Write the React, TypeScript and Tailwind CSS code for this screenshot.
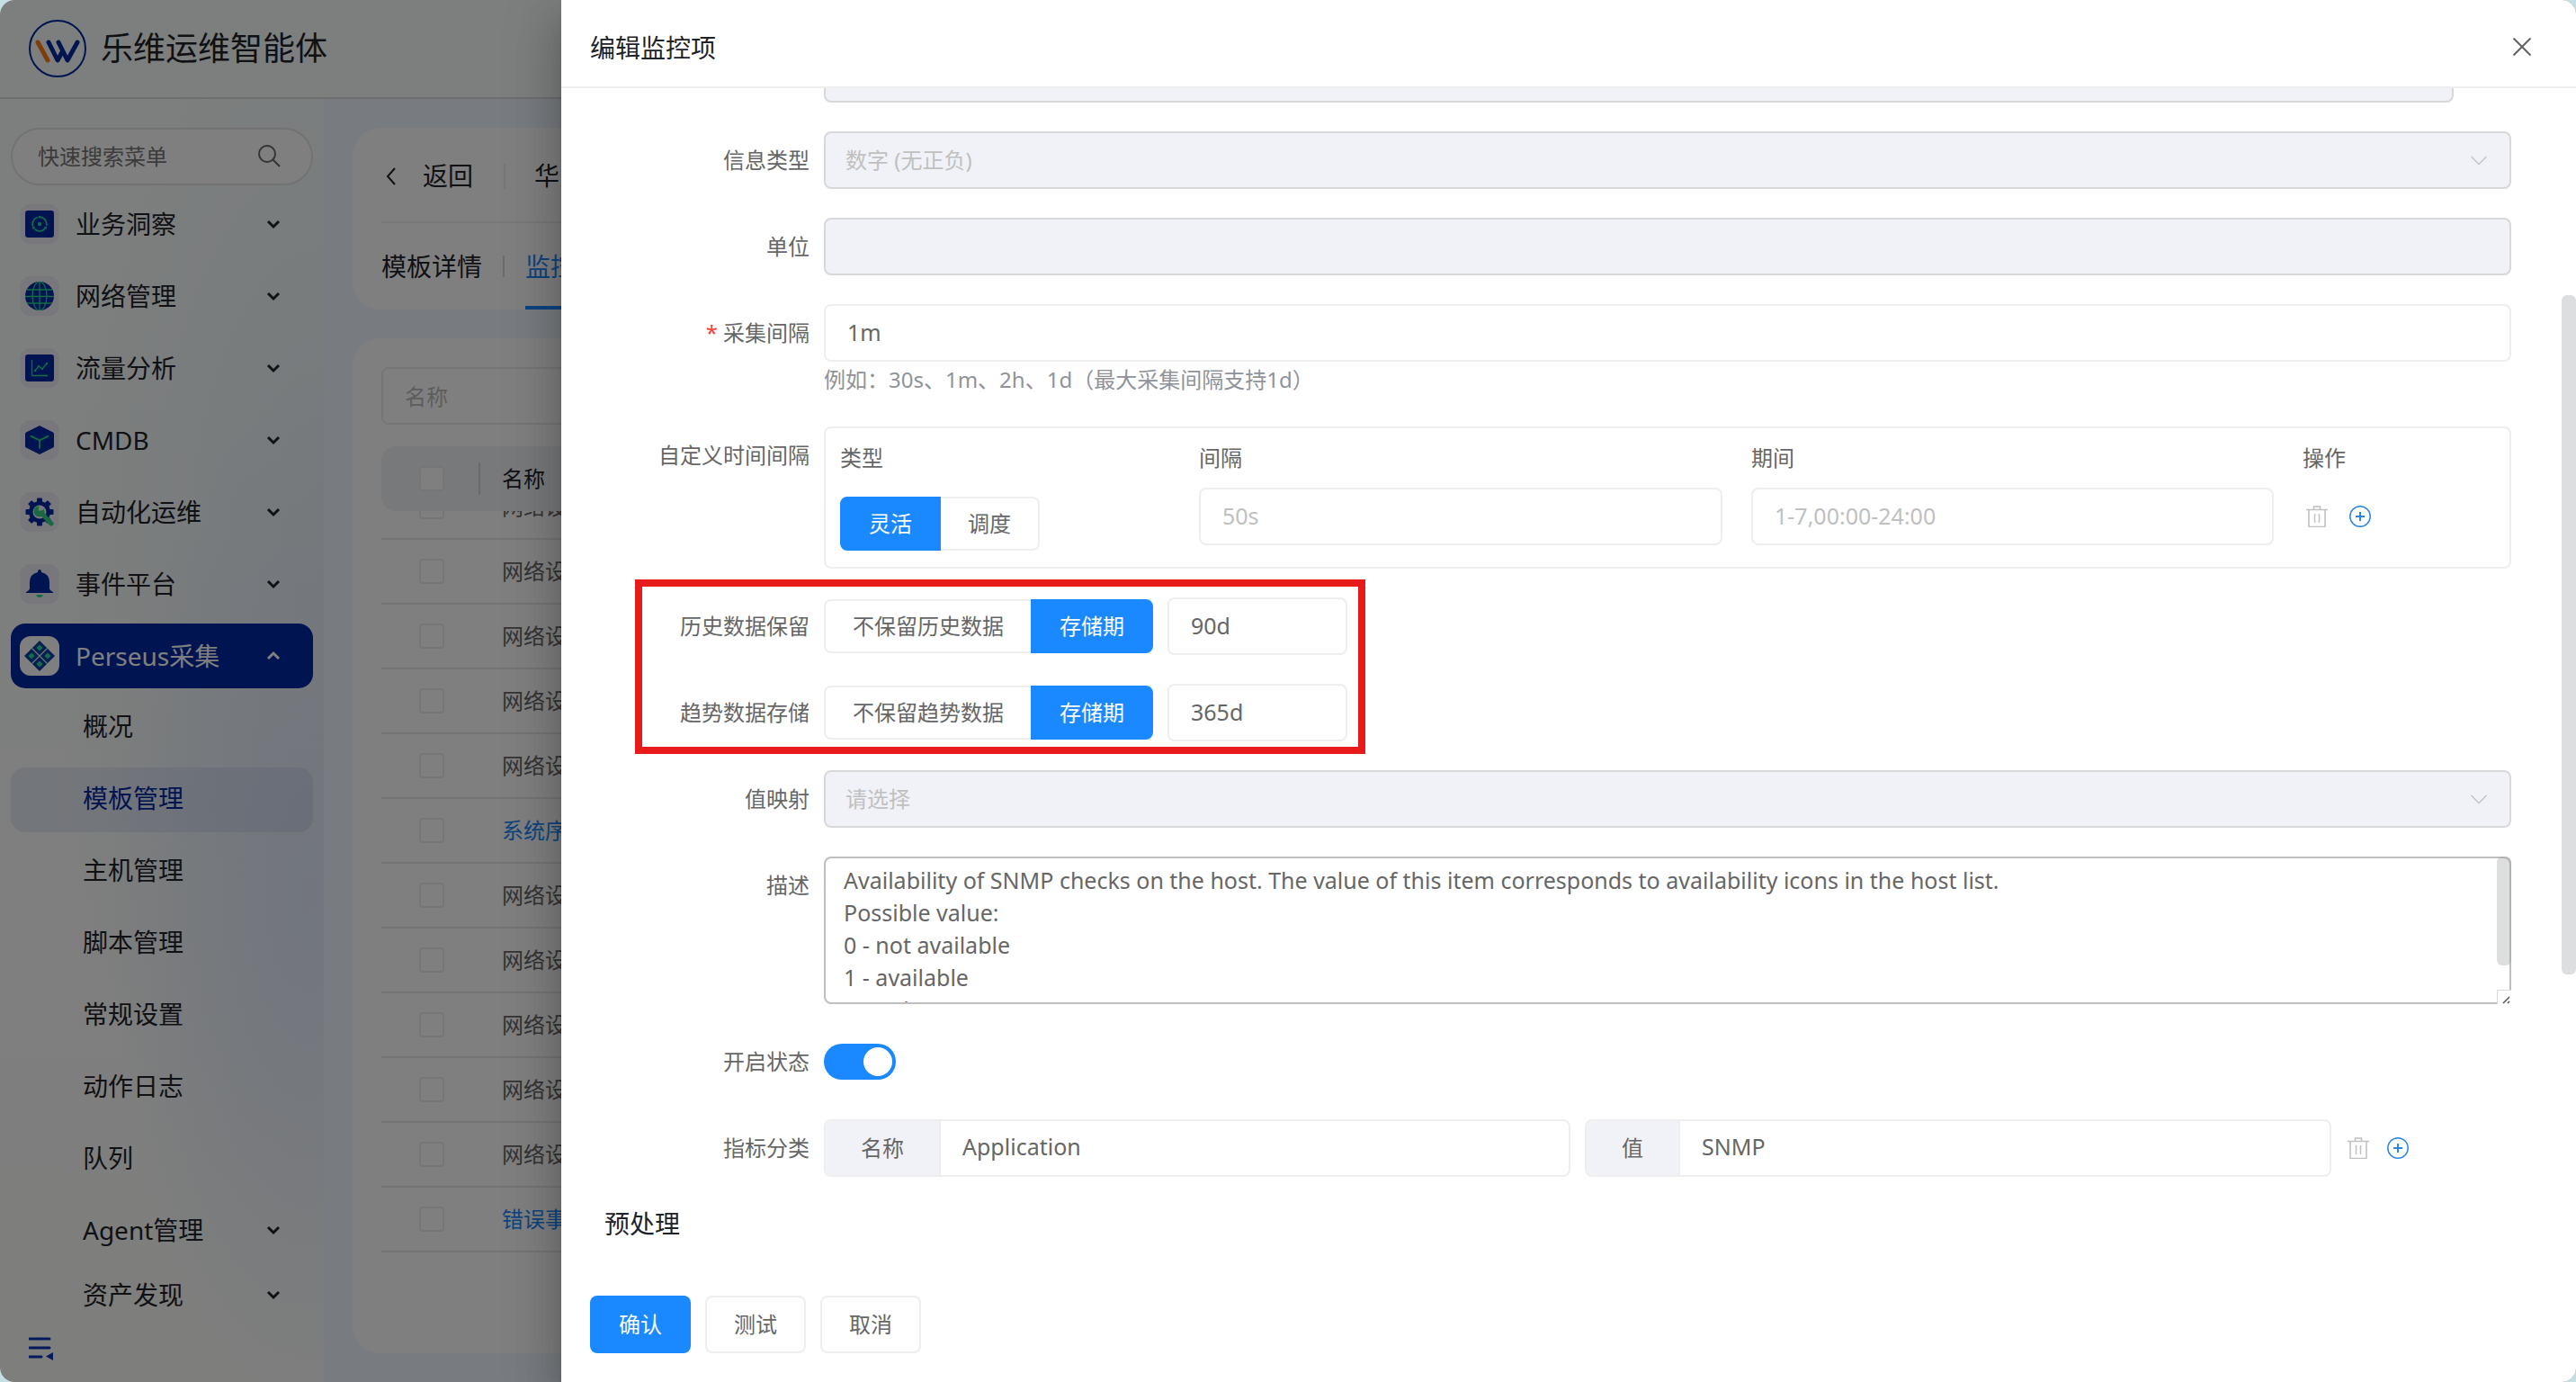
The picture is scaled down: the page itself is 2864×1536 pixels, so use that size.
import React from "react";

type IconProps = { className?: string };

const Logo = () => (
  <svg viewBox="0 0 64 64" className="size-16" fill="none" aria-hidden="true">
    <circle cx="32" cy="32" r="31" stroke="#0029a3" strokeWidth="2" />
    <g strokeWidth="5" strokeLinecap="round" strokeLinejoin="round">
      <path d="M22 25 32 45 37 36" stroke="#0029a3" />
      <path d="M33 25 43 45 54 25" stroke="#0029a3" />
      <path d="M10 25 21 45" stroke="#ff7d12" />
    </g>
  </svg>
);

const InsightIcon = () => (
  <svg viewBox="0 0 32 32" className="size-8" fill="none" aria-hidden="true">
    <rect width="32" height="30" y="1" rx="3" fill="#0029a3" />
    <circle cx="16" cy="16" r="2.2" fill="#22d98b" />
    <circle cx="16" cy="16" r="7.800" stroke="#22d98b" strokeWidth="1.800" strokeDasharray="12.500 3.830" transform="rotate(-80 16 16)" />
    <circle cx="16" cy="8.200" r="1.500" fill="#22d98b" />
    <circle cx="9.300" cy="20" r="1.500" fill="#22d98b" />
    <circle cx="22.700" cy="20" r="1.500" fill="#22d98b" />
  </svg>
);

const GlobeIcon = () => (
  <svg viewBox="0 0 32 32" className="size-8" fill="none" aria-hidden="true">
    <circle cx="16" cy="16" r="16" fill="#0029a3" />
    <g stroke="#22d98b" strokeWidth="1.300">
      <path d="M16 0v32M1.500 9h29M0 16.500h32M2 24h28" />
      <ellipse cx="16" cy="16" rx="8" ry="16" />
    </g>
  </svg>
);

const ChartIcon = () => (
  <svg viewBox="0 0 32 32" className="size-8" fill="none" aria-hidden="true">
    <rect width="32" height="30" y="1" rx="3" fill="#0029a3" />
    <path d="M7.500 7v17.500H25" stroke="#22d98b" strokeWidth="1.300" />
    <path d="M11 19l4-5 4 3 5-6" stroke="#22d98b" strokeWidth="1.300" />
    <circle cx="11" cy="19" r="1.200" fill="#22d98b" />
    <circle cx="15" cy="14" r="1.200" fill="#22d98b" />
    <circle cx="19" cy="17" r="1.200" fill="#22d98b" />
    <circle cx="24" cy="11" r="1.200" fill="#22d98b" />
  </svg>
);

const CubeIcon = () => (
  <svg viewBox="0 0 32 32" className="size-8" fill="none" aria-hidden="true">
    <path d="M16 0 31 7.500Q32 8 32 9v14q0 1-1 1.500L16 32 1 24.500Q0 24 0 23V9q0-1 1-1.500Z" fill="#0029a3" />
    <path d="M6 11.500l10 5 10-5M16 16.500v9" stroke="#22c97b" strokeWidth="2" />
  </svg>
);

const GearIcon = () => (
  <svg viewBox="0 0 32 32" className="size-8" fill="none" aria-hidden="true">
    <g fill="#0029a3">
      <circle cx="16" cy="16" r="12" />
      {[0, 45, 90, 135].map((a) => (
        <rect key={a} x="13" y="0.500" width="6" height="31" rx="1" transform={`rotate(${a} 16 16)`} />
      ))}
    </g>
    <circle cx="16" cy="16" r="7.500" fill="#efeff8" />
    <path d="M18 17 29 29" stroke="#35d385" strokeWidth="5" strokeLinecap="round" />
    <path d="M14 9.500a6 6 0 1 0 7.500 7l-.5-4-3.500 3-3-1.500 1-4Z" fill="#35d385" />
  </svg>
);

const BellIcon = () => (
  <svg viewBox="0 0 32 32" className="size-8" aria-hidden="true">
    <path d="M16 0q2 0 2 3 9 2 9 11v7q0 2 4 4v1H1v-1q4-2 4-4v-7Q5 5 14 3q0-3 2-3Z" fill="#0029a3" />
    <path d="M12.500 28h7a3.500 3 0 0 1-7 0Z" fill="#22d98b" />
  </svg>
);

const PerseusIcon = () => (
  <svg viewBox="0 0 36 36" className="size-9" aria-hidden="true">
    <path d="M18 1 35 18 18 35 1 18Z" fill="#0a3f9c" />
    <path d="M9.500 9.500l17 17M26.500 9.500l-17 17" stroke="#dfe8f5" strokeWidth="1.200" />
    <path d="M18 5.500l3.500 3.500-3.500 3.500-3.500-3.500ZM18 23.500l3.500 3.500-3.500 3.500-3.500-3.500ZM9 14.500l3.500 3.500-3.500 3.500-3.500-3.500ZM27 14.500l3.500 3.500-3.500 3.500-3.500-3.500Z" fill="#22d9a0" />
  </svg>
);

const ChevronDown = ({ className = "" }: IconProps) => (
  <svg viewBox="0 0 16 16" className={`size-4 ${className}`} fill="none" stroke="currentColor" strokeWidth="3" aria-hidden="true">
    <path d="M2 5l6 6 6-6" />
  </svg>
);

const TrashIcon = () => (
  <svg viewBox="0 0 24 24" className="size-6" fill="none" stroke="#c0c0c0" strokeWidth="1.500" aria-hidden="true">
    <path d="M0 4.500h24M3 4.500v19h18v-19M8.500 4.500V1h7v3.500M9.500 9v10M14.500 9v10" />
  </svg>
);

const PlusIcon = () => (
  <svg viewBox="0 0 24 24" className="size-6" fill="none" stroke="#2b85e4" strokeWidth="1.500" aria-hidden="true">
    <circle cx="12" cy="12" r="11.200" />
    <path d="M7 12h10M12 7v10" strokeWidth="2" />
  </svg>
);

const SelectArrow = () => (
  <svg viewBox="0 0 20 20" className="pointer-events-none absolute right-[26px] top-1/2 size-5 -translate-y-1/2" fill="none" stroke="#c0c4cc" strokeWidth="1.500" aria-hidden="true">
    <path d="M1.500 6l8.500 8.500L18.500 6" />
  </svg>
);

const menu = [
  { label: "业务洞察", icon: <InsightIcon /> },
  { label: "网络管理", icon: <GlobeIcon /> },
  { label: "流量分析", icon: <ChartIcon /> },
  { label: "CMDB", icon: <CubeIcon /> },
  { label: "自动化运维", icon: <GearIcon /> },
  { label: "事件平台", icon: <BellIcon /> },
];

const subMenu = ["概况", "模板管理", "主机管理", "脚本管理", "常规设置", "动作日志", "队列"];

const rows = ["网络设", "网络设", "网络设", "网络设", "网络设", "系统序", "网络设", "网络设", "网络设", "网络设", "网络设", "错误事"];

function Sidebar() {
  return (
    <aside className="flex w-[360px] shrink-0 flex-col bg-[radial-gradient(ellipse_at_95%_62%,#e4ebfa_0%,transparent_45%),radial-gradient(ellipse_at_100%_38%,#ecf4f9_0%,transparent_60%),linear-gradient(#fbfffd,#fcfdfb)] px-3 pt-8 text-[28px] text-[#1f2329]">
      <div className="mb-[7px] flex h-16 items-center rounded-full border-2 border-[#e4e4e4] bg-white pl-7 pr-[34px]">
        <input aria-label="快速搜索菜单" placeholder="快速搜索菜单" className="min-w-0 flex-1 bg-transparent text-2xl outline-none placeholder:text-[#777]" />
        <svg viewBox="0 0 26 26" className="size-[26px] text-[#666]" fill="none" stroke="currentColor" strokeWidth="2" aria-hidden="true">
          <circle cx="11" cy="10" r="9" />
          <path d="M17.500 16.500 25 24" />
        </svg>
      </div>
      <nav className="flex flex-col">
        <div className="mb-2 flex flex-col gap-2">
          {menu.map((m) => (
            <button key={m.label} className="flex h-[72px] w-full items-center pl-2.5 pr-9 text-left">
              <span className="flex size-11 items-center justify-center rounded-xl bg-[#efeff8]">{m.icon}</span>
              <span className="ml-[18px] flex-1">{m.label}</span>
              <ChevronDown />
            </button>
          ))}
          <button className="flex h-[72px] w-full items-center rounded-2xl bg-[#0029a3] pl-2.5 pr-9 text-left text-white">
            <span className="flex size-11 items-center justify-center rounded-xl bg-white">
              <PerseusIcon />
            </span>
            <span className="ml-[18px] flex-1">Perseus采集</span>
            <ChevronDown className="rotate-180" />
          </button>
          {subMenu.map((s) => (
            <a
              key={s}
              href="#"
              className={`flex h-[72px] items-center rounded-2xl pb-1 pl-20 ${s === "模板管理" ? "bg-[#0029a3]/8 text-[#0029a3]" : ""}`}
            >
              {s}
            </a>
          ))}
        </div>
        {["Agent管理", "资产发现"].map((s) => (
          <button key={s} className="flex h-[72px] w-full items-center pb-1 pl-20 pr-9 text-left">
            <span className="flex-1">{s}</span>
            <ChevronDown />
          </button>
        ))}
      </nav>
      <button aria-label="收起菜单" className="ml-5 mt-1 size-8">
        <svg viewBox="0 0 32 32" className="size-8" aria-hidden="true">
          <path d="M1 7h22M1 17h22M1 27h13" stroke="#0a35b8" strokeWidth="3" strokeLinecap="round" />
          <path d="M27 22v9l-8-4.500Z" fill="#0a35b8" />
        </svg>
      </button>
    </aside>
  );
}

function Checkbox({ label }: { label: string }) {
  return <input type="checkbox" aria-label={label} className="block size-7 appearance-none rounded border-2 border-[#ececec] bg-white" />;
}

function Content() {
  return (
    <main className="flex min-w-0 flex-1 flex-col gap-8 bg-[#f0f7ff] p-8 text-2xl text-[#666]">
      <section className="rounded-[32px] bg-white px-8 text-[28px] text-[#1f2329]">
        <div className="flex h-[106px] items-center border-b-2 border-[#eee] pt-1">
          <button className="flex items-center">
            <svg viewBox="0 0 24 24" className="size-6" fill="none" stroke="currentColor" strokeWidth="2" aria-hidden="true">
              <path d="M15 3l-8 9 8 9" />
            </svg>
            <span className="ml-[22px]">返回</span>
          </button>
          <span className="ml-[34px] mr-8 h-7 w-0.5 bg-[#eee]" />
          <span>华为</span>
        </div>
        <div className="flex h-24 items-center">
          <a href="#" className="pt-0.5">模板详情</a>
          <span className="mx-[23px] h-6 w-0.5 bg-[#d8d8d8]" />
          <a href="#" className="flex h-full items-center border-b-4 border-[#1a89ff] pt-1.5 text-[#1a89ff]">监控</a>
        </div>
      </section>
      <section className="flex min-h-0 flex-1 flex-col rounded-[32px] bg-white px-8 pt-8">
        <input aria-label="名称" placeholder="名称" className="h-16 w-80 shrink-0 rounded-lg border-2 border-[#eaeaea] px-6 outline-none placeholder:text-[#bbb]" />
        <div className="mt-6 flex h-[72px] shrink-0 items-center rounded-2xl bg-[#f1f2f7] pl-[42px] text-[#1f2329]">
          <Checkbox label="全选" />
          <span className="mx-[38px] mr-6 h-9 w-0.5 bg-[#d4d4d8]" />
          名称
        </div>
        <div className="overflow-hidden">
          <table className="-mt-[41px] w-full border-collapse text-left">
            <tbody>
              {rows.map((r, i) => (
                <tr key={i} className="h-[72px] border-b-2 border-[#e9e9e9]">
                  <td className="w-[134px] pl-[42px]">
                    <Checkbox label={`选择第${i + 1}行`} />
                  </td>
                  <td className={r === "网络设" ? "" : "text-[#1a89ff]"}>{r}</td>
                </tr>
              ))}
            </tbody>
          </table>
        </div>
      </section>
    </main>
  );
}

function Field({ label, htmlFor, required, children }: { label: string; htmlFor?: string; required?: boolean; children: React.ReactNode }) {
  return (
    <div className="flex gap-4">
      <label htmlFor={htmlFor} className="flex h-16 w-[212px] shrink-0 items-center justify-end">
        {required && <span className="mr-1.5 text-[#f04134]">*</span>}
        {label}
      </label>
      <div className="min-w-0 flex-1">{children}</div>
    </div>
  );
}

function Segmented({ name, options, selected }: { name: string; options: string[]; selected: number }) {
  return (
    <div className="flex h-[60px]" role="radiogroup">
      {options.map((o, i) => (
        <label
          key={o}
          className="flex cursor-pointer items-center border-2 border-[#eee] px-7 first:rounded-l-lg last:rounded-r-lg not-has-checked:first:border-r-0 not-has-checked:last:border-l-0 has-checked:border-[#1a89ff] has-checked:bg-[#1a89ff] has-checked:text-white"
        >
          <input type="radio" name={name} defaultChecked={i === selected} className="sr-only" />
          <span className="px-0.5">{o}</span>
        </label>
      ))}
    </div>
  );
}

function DisabledSelect({ id, text }: { id: string; text: string }) {
  return (
    <div className="relative">
      <select id={id} disabled className="block h-16 w-full appearance-none rounded-lg border-2 border-[#d8d8d8] bg-[#f1f2f7] px-[22px] text-[#c0c0c0] opacity-100">
        <option>{text}</option>
      </select>
      <SelectArrow />
    </div>
  );
}

function RowActions() {
  return (
    <>
      <button type="button" aria-label="删除"><TrashIcon /></button>
      <button type="button" aria-label="添加"><PlusIcon /></button>
    </>
  );
}

const inputClass = "block h-16 rounded-lg border-2 border-[#eee] bg-white px-6 pb-0.5 text-[25px] outline-none placeholder:text-[#c0c0c0]";

function AddonInput({ id, addon, value, addonClass }: { id: string; addon: string; value: string; addonClass: string }) {
  return (
    <div className="flex h-16 min-w-0 flex-1 overflow-hidden rounded-lg border-2 border-[#eee]">
      <label htmlFor={id} className={`flex shrink-0 items-center justify-center border-r-2 border-[#eee] bg-[#f1f2f7] ${addonClass}`}>{addon}</label>
      <input id={id} defaultValue={value} className="min-w-0 flex-1 px-6 pb-0.5 text-[25px] outline-none" />
    </div>
  );
}

const description = `Availability of SNMP checks on the host. The value of this item corresponds to availability icons in the host list.
Possible value:
0 - not available
1 - available
2 - unknown`;

function Drawer() {
  return (
    <div
      role="dialog"
      aria-label="编辑监控项"
      className="absolute inset-y-0 left-[624px] right-0 flex flex-col bg-white text-2xl text-[#666] shadow-[0_16px_20px_-10px_rgba(0,0,0,0.2),0_32px_48px_4px_rgba(0,0,0,0.14),0_12px_60px_10px_rgba(0,0,0,0.12)]"
    >
      <header className="flex h-[98px] shrink-0 items-center justify-between border-b-2 border-[#eee] pl-8 pr-12 pt-2">
        <h2 className="pt-1 text-[28px] text-[#1f2329]">编辑监控项</h2>
        <button aria-label="关闭">
          <svg viewBox="0 0 24 24" className="size-6" fill="none" stroke="#606266" strokeWidth="2" aria-hidden="true">
            <path d="M2.500 2.500l19 19M21.500 2.500l-19 19" />
          </svg>
        </button>
      </header>
      <div className="relative min-h-0 flex-1 overflow-hidden">
        <form className="-mt-12 flex flex-col gap-8 pl-16 pr-[72px]">
          <div className="ml-[228px] mr-16">
            <input disabled aria-label="键值" className="block h-16 w-full rounded-lg border-2 border-[#d8d8d8] bg-[#f1f2f7]" />
          </div>
          <Field label="信息类型" htmlFor="info-type">
            <DisabledSelect id="info-type" text="数字 (无正负)" />
          </Field>
          <Field label="单位" htmlFor="unit">
            <input id="unit" disabled className="block h-16 w-full rounded-lg border-2 border-[#d8d8d8] bg-[#f1f2f7]" />
          </Field>
          <Field label="采集间隔" htmlFor="interval" required>
            <input id="interval" defaultValue="1m" className={`${inputClass} w-full`} />
            <p className="h-10 leading-10 text-[#909399]">例如：30s、1m、2h、1d（最大采集间隔支持1d）</p>
          </Field>
          <Field label="自定义时间间隔">
            <div className="grid grid-cols-[399fr_614fr_613fr_246fr] rounded-lg border-2 border-[#eee] pb-[18px]">
              {["类型", "间隔", "期间", "操作"].map((h) => (
                <div key={h} className="flex h-[66px] items-center px-4">{h}</div>
              ))}
              <div className="px-4 pt-2.5">
                <Segmented name="interval-type" options={["灵活", "调度"]} selected={0} />
              </div>
              <div className="px-4">
                <input aria-label="间隔" placeholder="50s" className={`${inputClass} w-full`} />
              </div>
              <div className="px-4">
                <input aria-label="期间" placeholder="1-7,00:00-24:00" className={`${inputClass} w-full`} />
              </div>
              <div className="flex h-16 items-center gap-6 px-5">
                <RowActions />
              </div>
            </div>
          </Field>
          <div className="relative flex flex-col gap-8">
            <Field label="历史数据保留" htmlFor="history">
              <div className="flex items-center gap-4">
                <Segmented name="history-mode" options={["不保留历史数据", "存储期"]} selected={1} />
                <input id="history" defaultValue="90d" className={`${inputClass} w-[200px]`} />
              </div>
            </Field>
            <Field label="趋势数据存储" htmlFor="trend">
              <div className="flex items-center gap-4">
                <Segmented name="trend-mode" options={["不保留趋势数据", "存储期"]} selected={1} />
                <input id="trend" defaultValue="365d" className={`${inputClass} w-[200px]`} />
              </div>
            </Field>
            <div className="pointer-events-none absolute -bottom-3.5 -top-5 left-[18px] w-[812px] border-8 border-[#e81b1b]" />
          </div>
          <Field label="值映射" htmlFor="mapping">
            <DisabledSelect id="mapping" text="请选择" />
          </Field>
          <Field label="描述" htmlFor="desc">
            <div className="relative">
              <textarea
                id="desc"
                defaultValue={description}
                className="block h-[164px] w-full resize-none overflow-hidden rounded-lg border-2 border-[#bfbfbf] px-5 py-1.5 text-[25px] leading-9 outline-none"
              />
              <span className="absolute right-0 top-0 h-[121px] w-4 rounded-md bg-[#909399]/30" />
              <svg viewBox="0 0 16 16" className="absolute bottom-0 right-0 size-4" fill="none" aria-hidden="true">
                <path d="M0 0h16v16H0Z" fill="#fff" />
                <path d="M.5 16V.5H16" stroke="#d8d8d8" />
                <path d="M7 15l7-7M12 15l2-2" stroke="#555" strokeWidth="1.500" />
              </svg>
            </div>
          </Field>
          <Field label="开启状态" htmlFor="enabled">
            <div className="flex h-16 items-center">
              <input
                id="enabled"
                type="checkbox"
                role="switch"
                defaultChecked
                className="relative h-10 w-20 cursor-pointer appearance-none rounded-full bg-[#dcdfe6] before:absolute before:left-1 before:top-1 before:size-8 before:rounded-full before:bg-white checked:bg-[#1a89ff] checked:before:left-11"
              />
            </div>
          </Field>
          <Field label="指标分类" htmlFor="tag-name">
            <div className="flex items-center gap-4">
              <AddonInput id="tag-name" addon="名称" value="Application" addonClass="w-32" />
              <AddonInput id="tag-value" addon="值" value="SNMP" addonClass="w-[104px]" />
              <div className="flex w-[184px] items-center gap-5 pl-0.5">
                <RowActions />
              </div>
            </div>
          </Field>
          <h3 className="-ml-4 h-10 text-[28px] leading-10 text-[#1f2329]">预处理</h3>
        </form>
        <span className="absolute right-0 top-[230px] h-[755px] w-4 rounded-md bg-[#dddee0]" />
      </div>
      <footer className="flex shrink-0 gap-4 px-8 pb-8 pt-4">
        <button className="h-16 rounded-lg bg-[#1a89ff] px-8 text-white">确认</button>
        <button className="h-16 rounded-lg border-2 border-[#eee] px-[30px]">测试</button>
        <button className="h-16 rounded-lg border-2 border-[#eee] px-[30px]">取消</button>
      </footer>
    </div>
  );
}

export default function App() {
  return (
    <div className="h-screen bg-[#c5e0e4] font-['Noto_Sans','Noto_Sans_CJK_SC',sans-serif]">
      <div className="relative flex h-full flex-col overflow-hidden rounded-2xl bg-white">
        <header className="flex h-[110px] shrink-0 items-center gap-4 border-b-2 border-[#dcdcdc] bg-[#fbfffc] pl-8 text-[36px] text-[#1f2329]">
          <Logo />
          <h1>乐维运维智能体</h1>
        </header>
        <div className="flex min-h-0 flex-1">
          <Sidebar />
          <Content />
        </div>
        <div className="absolute inset-0 bg-black/50" />
        <Drawer />
      </div>
    </div>
  );
}
